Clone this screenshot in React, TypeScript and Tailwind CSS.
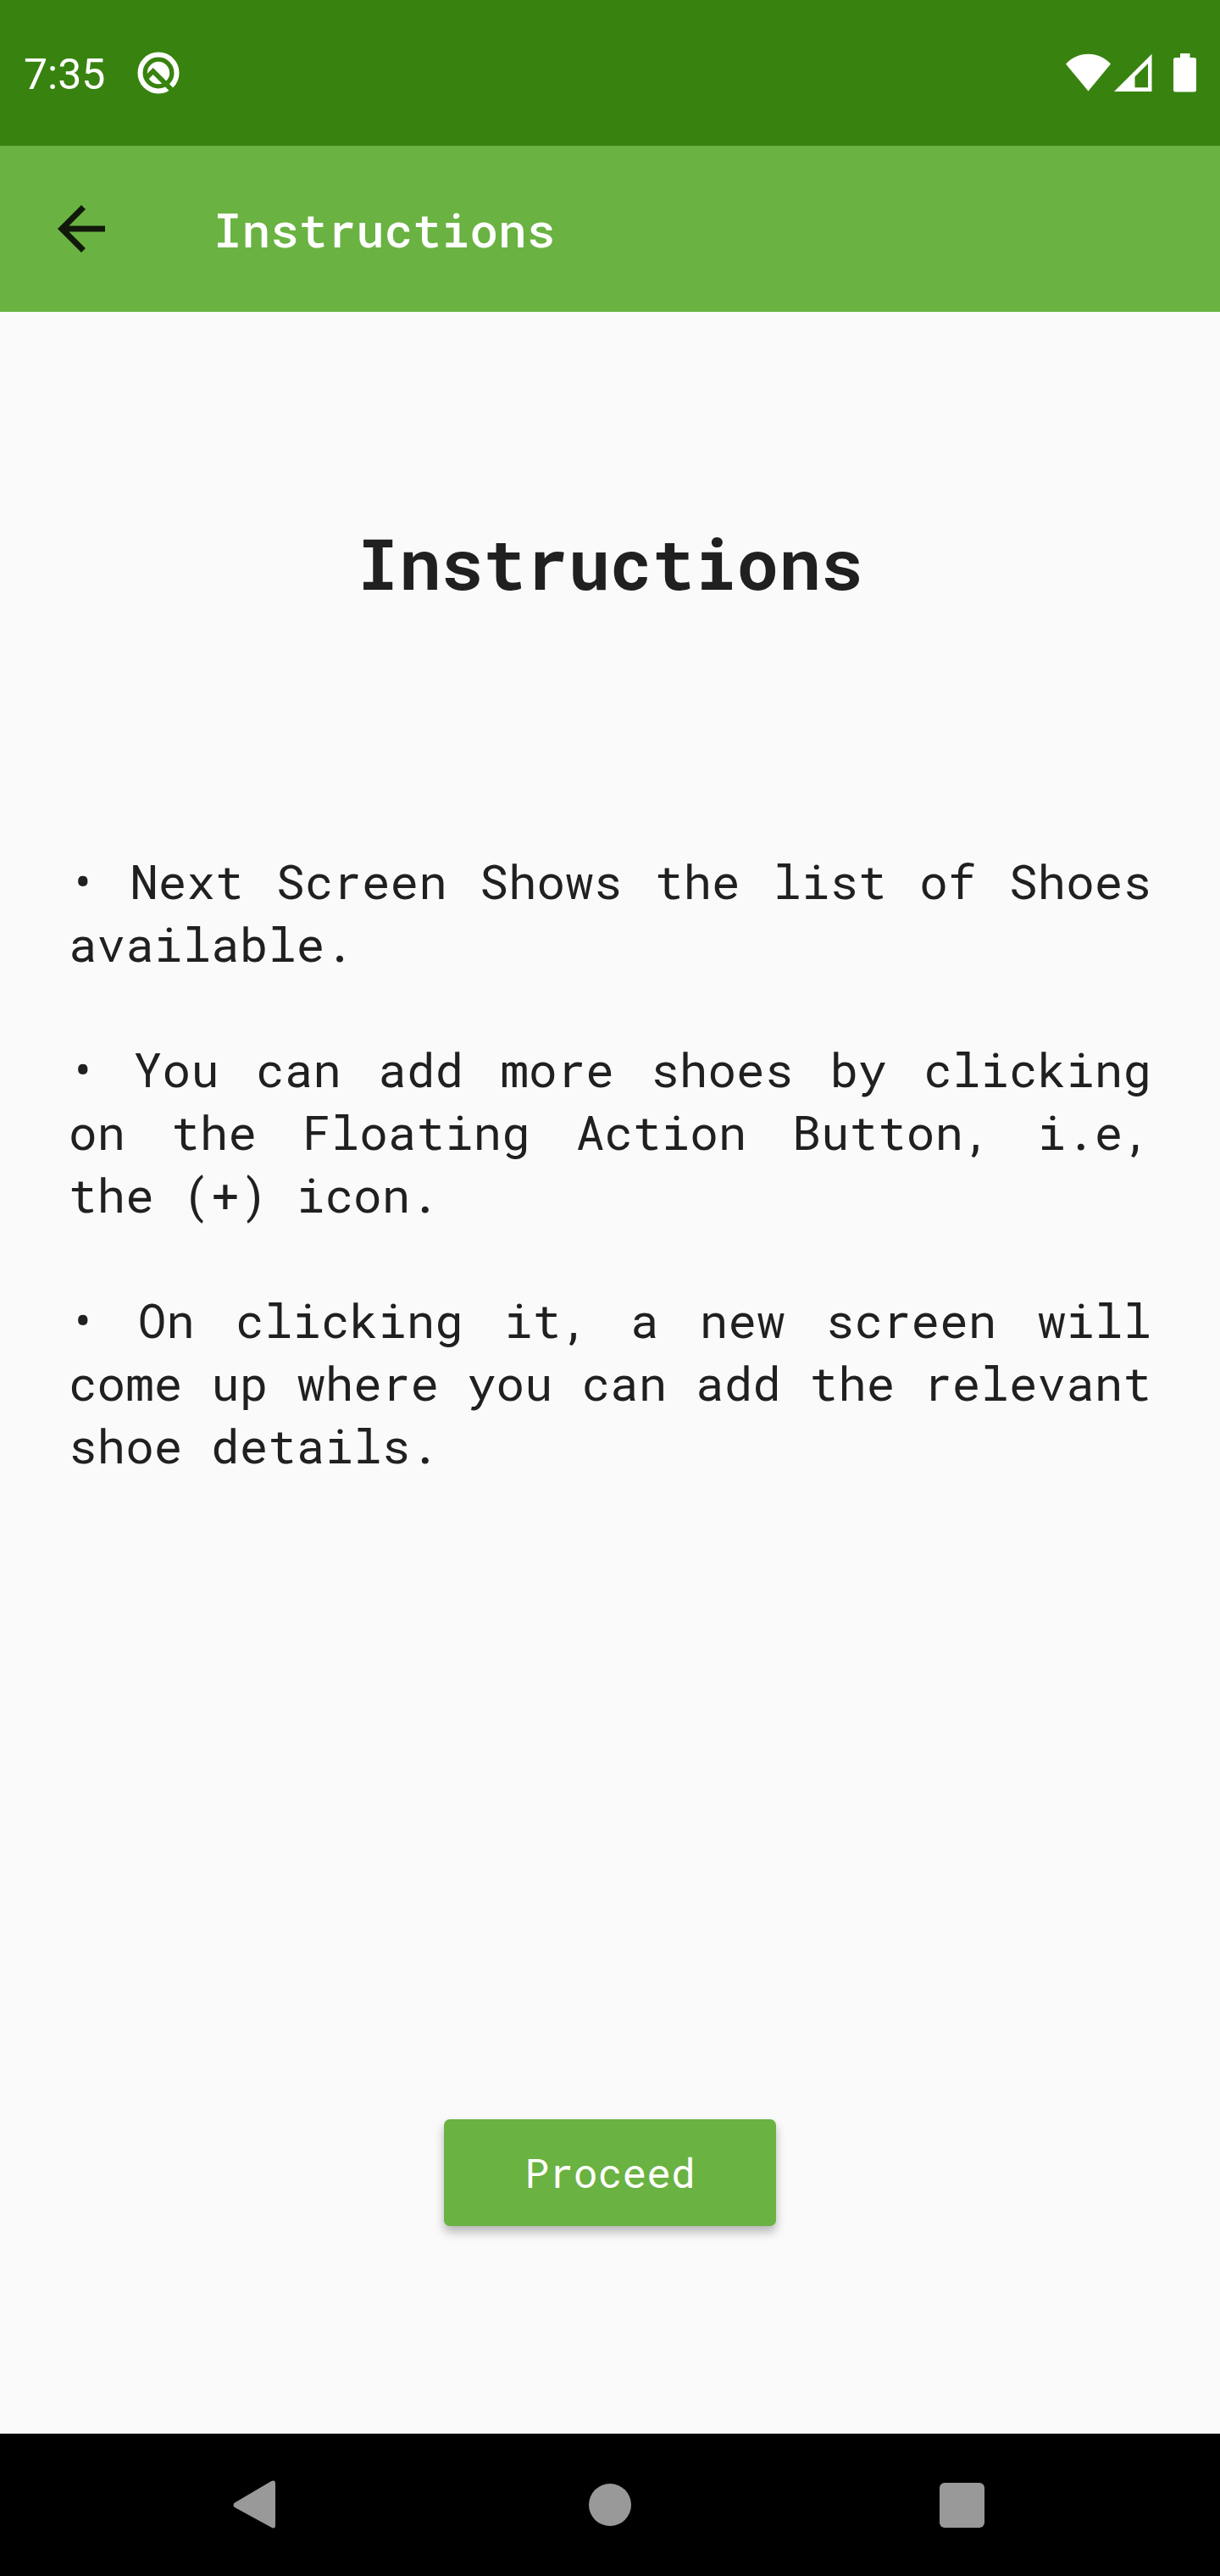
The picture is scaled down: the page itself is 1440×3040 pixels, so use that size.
const instructions = [
  'Next Screen Shows the list of Shoes available.',
  'You can add more shoes by clicking on the Floating Action Button, i.e, the (+) icon.',
  'On clicking it, a new screen will come up where you can add the relevant shoe details.',
];

function AndroidQIcon() {
  return (
    <svg viewBox="0 0 50 50" className="size-[50px]" aria-hidden="true">
      <circle cx="25" cy="25" r="21.5" fill="none" stroke="#fff" strokeWidth="6" />
      <circle cx="25" cy="25" r="13.2" fill="#fff" />
      <path d="M11 30.700 18.700 23 45 49.300" fill="none" stroke="#38830F" strokeWidth="5.800" />
    </svg>
  );
}

function WifiIcon() {
  return (
    <svg viewBox="0 0 53 46" className="h-[46px] w-[53px]" aria-hidden="true">
      <path d="M0 12.5C7 5 16 .8 26.500 .8S46 5 53 12.500L26.500 44.500Z" fill="#fff" />
    </svg>
  );
}

function SignalIcon() {
  return (
    <svg viewBox="0 0 45 46" className="h-[46px] w-[45px]" aria-hidden="true">
      <path d="M0 45 44.500 .7V45ZM24.500 27.500V40.300H40V12Z" fill="#fff" fillRule="evenodd" />
    </svg>
  );
}

function BatteryIcon() {
  return (
    <svg viewBox="0 0 27 46" className="h-[46px] w-[27px]" aria-hidden="true">
      <path
        d="M8 0H19.500V5H24.500Q27 5 27 7.500V43Q27 45.500 24.500 45.500H2.500Q0 45.500 0 43V7.500Q0 5 2.500 5H8Z"
        fill="#fff"
      />
    </svg>
  );
}

function StatusBar() {
  return (
    <div className="flex h-[172px] items-center justify-between bg-[#38830F] px-7 text-white">
      <div className="flex items-center gap-[38px]">
        <span className="pt-1 font-['Roboto',sans-serif] text-[50px] leading-[58px]">7:35</span>
        <AndroidQIcon />
      </div>
      <div className="flex items-center">
        <WifiIcon />
        <span className="ml-1">
          <SignalIcon />
        </span>
        <span className="ml-[25px]">
          <BatteryIcon />
        </span>
      </div>
    </div>
  );
}

function AppBar() {
  return (
    <header className="flex h-[196px] items-center bg-[#6AB242] px-[54px]">
      <button type="button" aria-label="Back" className="text-[#10190A]">
        <svg viewBox="0 0 24 24" className="size-[84px]" fill="currentColor" aria-hidden="true">
          <path d="M20 11H7.830l5.590-5.590L12 4l-8 8 8 8 1.410-1.410L7.830 13H20v-2z" />
        </svg>
      </button>
      <p className="ml-[114px] text-[56px] leading-[74px] font-medium text-white">Instructions</p>
    </header>
  );
}

function NavigationBar() {
  return (
    <nav className="grid h-[168px] grid-cols-3 items-center justify-items-center bg-black px-[97px] text-[#999999]">
      <button type="button" aria-label="Back">
        <svg viewBox="0 0 60 60" className="size-[60px]" fill="currentColor" aria-hidden="true">
          <path d="M2 27.500 44.500 2.500Q50 -.500 50 5V54Q50 59.500 45 56.500L2 33Q-1 30 2 27.500Z" />
        </svg>
      </button>
      <button type="button" aria-label="Home" className="size-[50px] rounded-full bg-[#999999]" />
      <button type="button" aria-label="Overview" className="size-[53px] rounded-md bg-[#999999]" />
    </nav>
  );
}

export default function App() {
  return (
    <div className="flex min-h-screen flex-col bg-[#FAFAFA] font-['Roboto_Mono','DejaVu_Sans_Mono',monospace] text-[#202020]">
      <StatusBar />
      <AppBar />
      <main className="flex flex-1 flex-col items-center px-[81px] pt-60 pb-[245px]">
        <h1 className="text-[83px] leading-[112px] font-bold">Instructions</h1>
        <ul className="mt-[282px] w-full space-y-[74px] text-justify text-[56px] leading-[74px]">
          {instructions.map((text) => (
            <li key={text}>{`• ${text}`}</li>
          ))}
        </ul>
        <button
          type="button"
          className="mt-auto h-[126px] rounded-[7px] bg-[#6AB242] px-[95px] text-[48px] text-white shadow-[0_7px_12px_rgba(0,0,0,0.28)]"
        >
          Proceed
        </button>
      </main>
      <NavigationBar />
    </div>
  );
}
